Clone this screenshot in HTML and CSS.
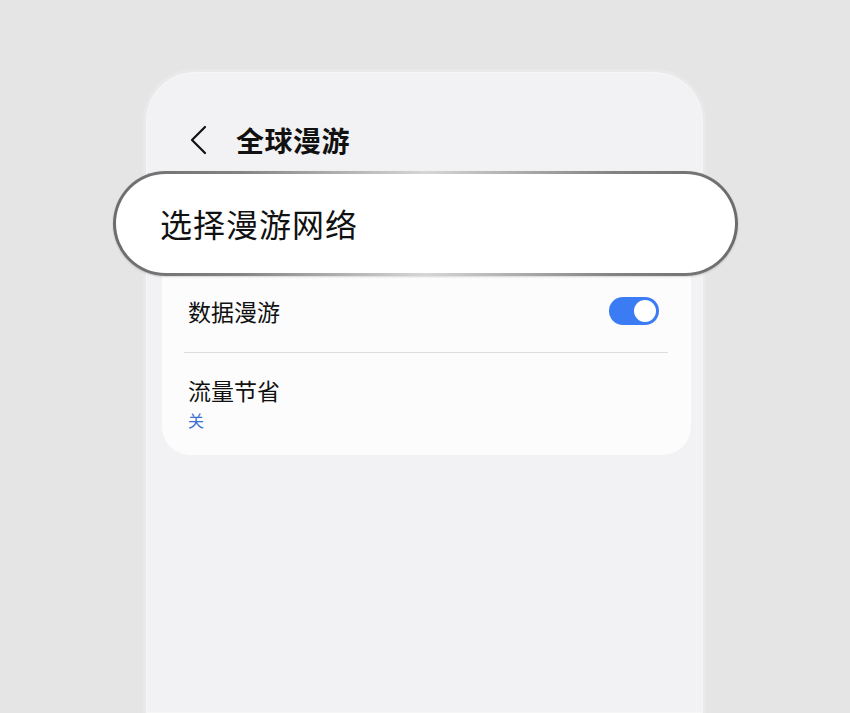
FILE: index.html
```html
<!DOCTYPE html>
<html lang="zh-CN">
<head>
<meta charset="utf-8">
<title>全球漫游</title>
<link rel="stylesheet" href="styles.css">
</head>
<body>
<div class="phone">
  <div class="header">
    <svg class="back" width="18" height="30" viewBox="0 0 18 30">
      <path d="M15 2 L2 15 L15 28" fill="none" stroke="#111" stroke-width="2.2" stroke-linecap="round" stroke-linejoin="round"/>
    </svg>
    <div class="title">全球漫游</div>
  </div>
  <div class="pill">选择漫游网络</div>
  <div class="card">
    <div class="row">
      <span class="label">数据漫游</span>
      <span class="toggle"><span class="knob"></span></span>
    </div>
    <div class="divider"></div>
    <div class="row2">
      <div class="label">流量节省</div>
      <div class="sub">关</div>
    </div>
  </div>
</div>
</body>
</html>
```

FILE: styles.css
```css
html, body {
  margin: 0;
  padding: 0;
}
body {
  background: #e5e5e5;
  width: 850px;
  height: 713px;
  overflow: hidden;
  font-family: "Noto Sans CJK SC", "Noto Sans", sans-serif;
  color: #111;
}
.phone {
  box-sizing: border-box;
  margin: 69px 0 0 143px;
  width: 563px;
  height: 644px;
  background: #f2f2f4;
  border: 3px solid #e9e9e9;
  border-bottom: none;
  border-radius: 52px 52px 0 0;
  box-shadow: inset 0 0 0 1px #f6f6f6;
}
.header {
  display: flex;
  align-items: center;
  padding: 47px 0 0 44px;
  height: 42px;
  gap: 28px;
}
.back {
  display: block;
}
.title {
  font-size: 28px;
  font-weight: 700;
  line-height: 40px;
  letter-spacing: 0.5px;
}
.pill {
  position: relative;
  z-index: 2;
  box-sizing: border-box;
  margin: 10px -35px 0 -33px;
  height: 105px;
  border: 3px solid transparent;
  border-radius: 53px;
  background:
    linear-gradient(#ffffff, #ffffff) padding-box,
    linear-gradient(90deg, #6c6c6c 0%, #838383 20%, #d6d6d6 50%, #838383 80%, #6c6c6c 100%) border-box;
  box-shadow: 0 1px 2px rgba(0,0,0,0.15);
  display: flex;
  align-items: center;
  padding: 0 0 2px 44px;
  font-size: 32px;
  line-height: 40px;
  letter-spacing: 1px;
}
.card {
  position: relative;
  z-index: 1;
  margin: -35px 12px 0 16px;
  padding-top: 35px;
  padding-bottom: 1px;
  background: #fcfcfd;
  border-radius: 28px;
}
.row {
  box-sizing: border-box;
  display: flex;
  align-items: center;
  justify-content: space-between;
  height: 76px;
  padding: 0 32px 6px 26px;
}
.label {
  font-size: 23px;
  line-height: 30px;
}
.toggle {
  box-sizing: border-box;
  width: 50px;
  height: 28px;
  border-radius: 14px;
  background: #3b7cf4;
  display: flex;
  align-items: center;
  justify-content: flex-end;
  padding-right: 3px;
}
.knob {
  width: 22px;
  height: 22px;
  border-radius: 50%;
  background: #ffffff;
}
.divider {
  height: 1px;
  background: #dedee0;
  margin: 0 23px 0 22px;
}
.row2 {
  padding: 22px 26px 23px;
  display: flex;
  flex-direction: column;
  gap: 4px;
}
.sub {
  font-size: 16px;
  line-height: 22px;
  color: #3c6fd2;
}
```
